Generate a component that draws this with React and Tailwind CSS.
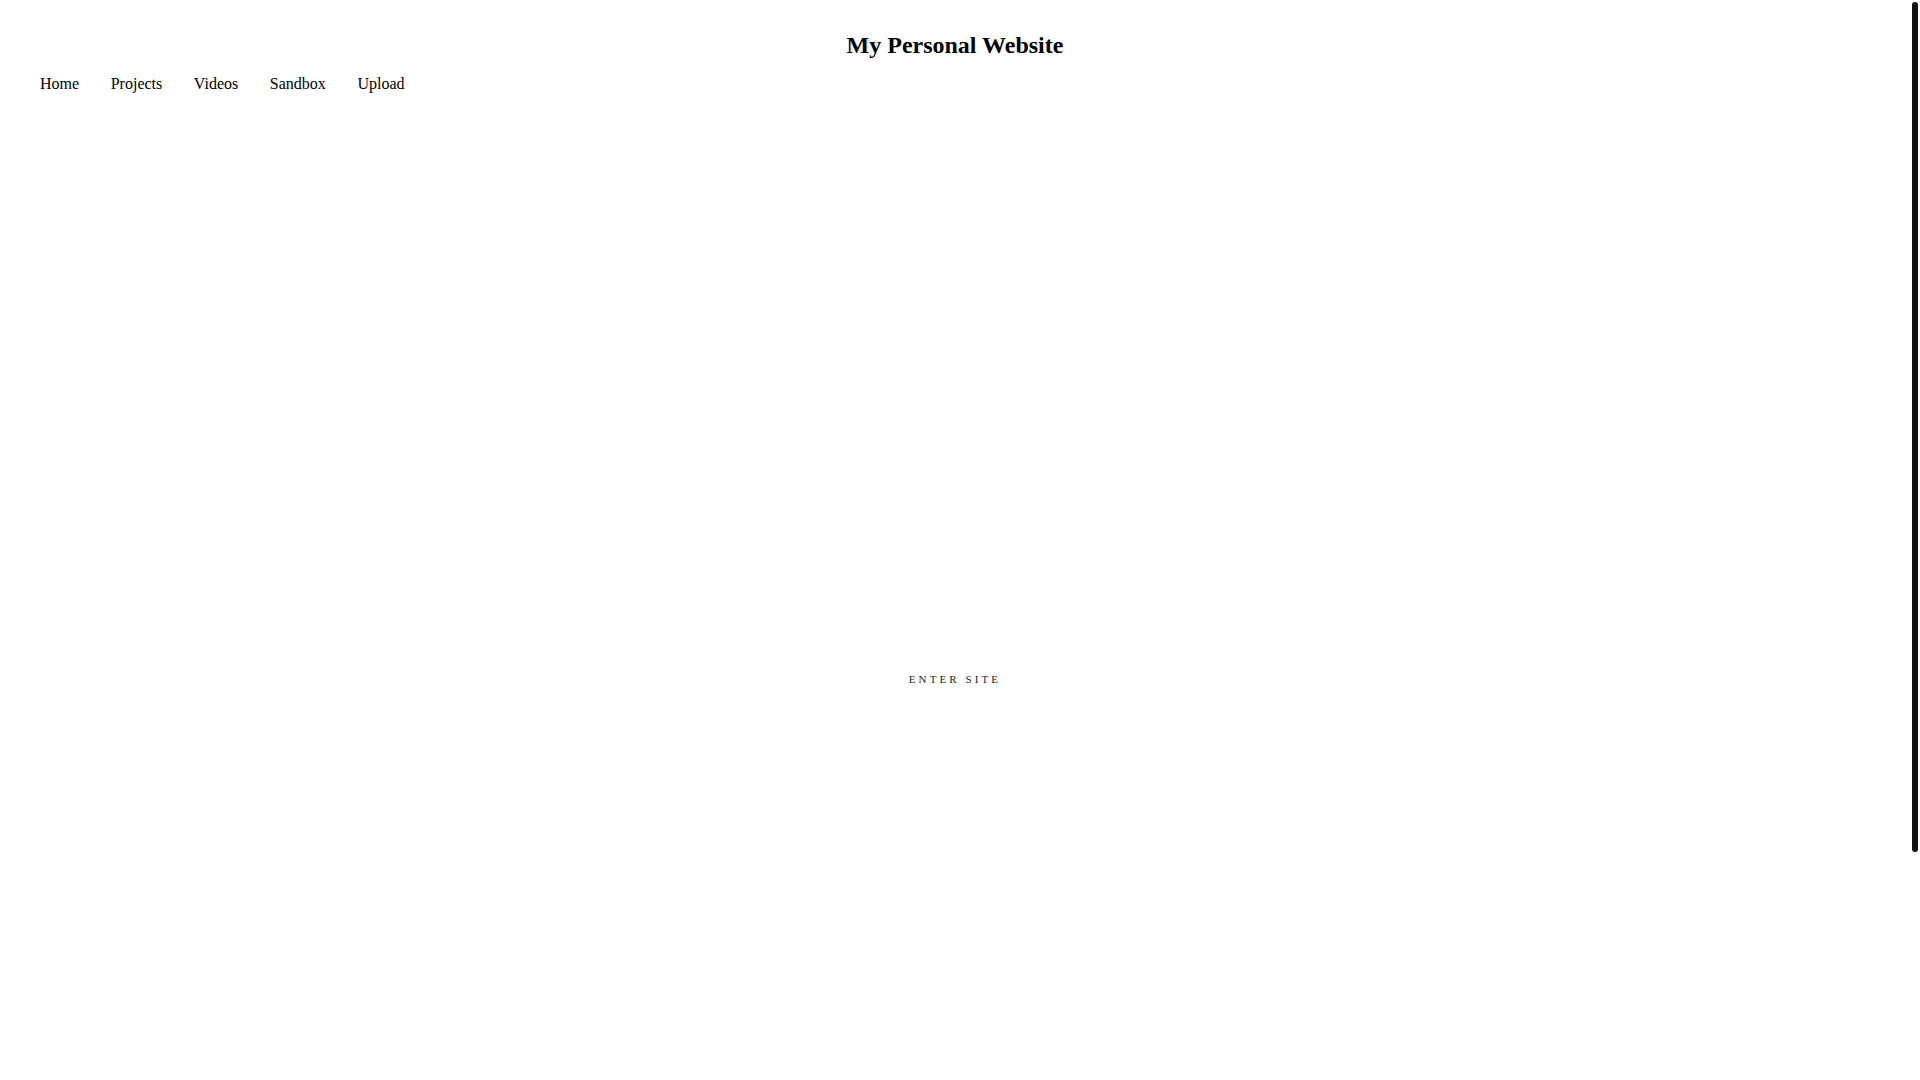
export default function App() {
  const links = ['Home', 'Projects', 'Videos', 'Sandbox', 'Upload'];

  return (
    <div className="flex h-screen overflow-hidden bg-white font-['Liberation_Serif',serif] text-black">
      <div className="flex min-w-0 flex-1 flex-col">
        <header className="pt-[31px]">
          <h1 className="text-center text-[24px] leading-[28px] font-bold">My Personal Website</h1>
          <nav className="mt-[13px] flex gap-[31.6px] pl-10">
            {links.map((link) => (
              <a key={link} href="#" className="text-[16px] leading-6 text-black">
                {link}
              </a>
            ))}
          </nav>
        </header>

        <main className="flex flex-1 flex-col items-center pt-[575px]">
          <a href="#" className="text-[11px] leading-4 tracking-[3.1px] text-[#222] uppercase">
            Enter Site
          </a>
        </main>
      </div>

      {/* scrollbar rail */}
      <div className="w-[10px] shrink-0 bg-white">
        <div className="mt-[2px] ml-[2px] h-[850px] w-[6px] rounded-full bg-[#111]"></div>
      </div>
    </div>
  );
}
